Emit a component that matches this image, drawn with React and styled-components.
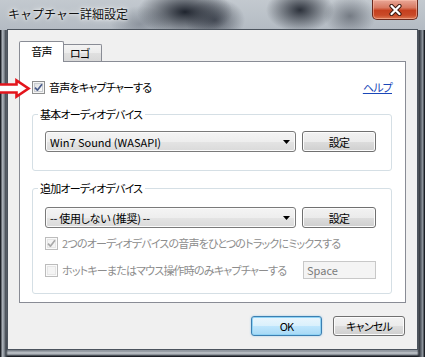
import React from "react";
import styled, { createGlobalStyle, css } from "styled-components";

const Global = createGlobalStyle`
  html, body { margin: 0; padding: 0; background: #fff; overflow: hidden; }
  body {
    font-family: "Noto Sans CJK JP", "Open Sans", sans-serif;
    font-size: 11px;
    color: #000;
  }
  * { box-sizing: border-box; }
`;

const jp = css`
  font-feature-settings: "palt";
  letter-spacing: -0.8px;
  white-space: nowrap;
`;

const Window = styled.div`
  width: 425px;
  height: 357px;
  display: flex;
  flex-direction: column;
  overflow: hidden;
  background:
    linear-gradient(90deg, #1f2329 0, #1f2329 1px, #b3b9c0 2px, #8b929a 4px, #3c424a 6px, rgba(0,0,0,0) 8px),
    linear-gradient(270deg, #1c2026 0, #1c2026 1px, #9aa1a9 2px, #5e656e 4px, #2e333a 6px, rgba(0,0,0,0) 8px),
    linear-gradient(0deg, #1a1e24 0, #1a1e24 1px, #7c838b 2px, #c4c9ce 4px, #8a9199 6px, rgba(0,0,0,0) 8px),
    radial-gradient(60px 40px at 20px 357px, #3a4049, rgba(0,0,0,0)),
    #a9b0b8;
`;

const TitleBar = styled.div`
  height: 30px;
  flex: none;
  display: flex;
  align-items: flex-start;
  justify-content: space-between;
  padding-left: 8px;
  background:
    radial-gradient(48px 24px at 185px 12px, rgba(22, 27, 37, 0.95), rgba(22, 27, 37, 0)),
    radial-gradient(30px 22px at 215px 20px, rgba(40, 46, 58, 0.7), rgba(40, 46, 58, 0)),
    radial-gradient(34px 22px at 300px 10px, rgba(28, 33, 43, 0.9), rgba(28, 33, 43, 0)),
    radial-gradient(26px 20px at 350px 16px, rgba(70, 76, 86, 0.6), rgba(70, 76, 86, 0)),
    radial-gradient(30px 18px at 140px 24px, rgba(90, 98, 110, 0.45), rgba(90, 98, 110, 0)),
    linear-gradient(180deg, #c3c9cf 0%, #b4bbc3 100%);
`;

const TitleText = styled.div`
  line-height: 28px;
  font-size: 12px;
  color: #111;
  white-space: nowrap;
  text-shadow: 0 0 6px rgba(255, 255, 255, 0.95), 0 0 3px rgba(255, 255, 255, 0.9);
`;

const CloseButton = styled.div`
  width: 46px;
  height: 20px;
  margin-right: 7px;
  border: 1px solid #6b2a1e;
  border-top: none;
  border-radius: 0 0 5px 5px;
  background: linear-gradient(180deg, #e9a797 0%, #d87a62 40%, #c5401f 55%, #c94a28 80%, #dc7a55 100%);
  box-shadow: inset 0 0 0 1px rgba(255, 200, 180, 0.5);
  display: flex;
  align-items: center;
  justify-content: center;
`;

const Frame = styled.div`
  flex: 1;
  min-height: 0;
  display: flex;
  padding: 0 8px 8px 8px;
`;

const Client = styled.div`
  flex: 1;
  min-width: 0;
  display: flex;
  flex-direction: column;
  background: #f0f0f0;
  padding: 11px 11px 0 11px;
  box-shadow: 0 0 0 1px #4c545e;
`;

const TabStrip = styled.div`
  display: flex;
  align-items: flex-end;
  height: 21px;
  margin-bottom: -1px;
  position: relative;
  z-index: 1;
`;

const Tab = styled.div`
  ${jp}
  display: flex;
  align-items: center;
  border: 1px solid #898c95;
  border-bottom: none;
  ${(p) =>
    p.$active
      ? `
    width: 45px;
    height: 21px;
    background: #fff;
    justify-content: center;
    padding-bottom: 2px;
    border-radius: 2px 2px 0 0;
  `
      : `
    width: 38px;
    height: 17px;
    margin-bottom: 1px;
    border-left: none;
    padding-left: 6px;
    background: linear-gradient(180deg, #f3f3f3 0%, #ececec 50%, #e0e0e0 51%, #d8d8d8 100%);
    border-radius: 0 2px 0 0;
  `}
`;

const Panel = styled.div`
  position: relative;
  height: 242px;
  min-width: 0;
  border: 1px solid #898c95;
  background: #fff;
  padding: 18px 13px 0 12px;
  display: flex;
  flex-direction: column;
`;

const Arrow = styled.svg`
  position: absolute;
  left: -20px;
  top: 16px;
`;

const Row = styled.div`
  display: flex;
  align-items: center;
  justify-content: space-between;
  height: ${(p) => p.$h || 14}px;
  margin-top: ${(p) => p.$mt || 0}px;
`;

const CheckLabel = styled.label`
  ${jp}
  display: flex;
  align-items: center;
  gap: 4px;
  color: ${(p) => (p.$disabled ? "#8d8d8d" : "#000")};
`;

const Box = styled.span`
  width: 13px;
  height: 13px;
  flex: none;
  display: flex;
  align-items: center;
  justify-content: center;
  border: 1px solid ${(p) => (p.$disabled ? "#bcbcbc" : "#8e8f8f")};
  background: ${(p) =>
    p.$disabled ? "#f4f4f4" : "linear-gradient(135deg, #d8dadc 0%, #f6f6f6 70%, #ffffff 100%)"};
  box-shadow: inset 0 0 0 1px ${(p) => (p.$disabled ? "#fafafa" : "#f4f4f4")},
    inset 0 0 0 2px ${(p) => (p.$disabled ? "#e6e6e6" : "#c9ccd0")};
`;

const HelpLink = styled.a`
  ${jp}
  color: #1a47b8;
  text-decoration: underline;
  cursor: pointer;
`;

const Group = styled.fieldset`
  margin: ${(p) => p.$mt}px 0 0 0;
  padding: 0;
  border: 1px solid #d5dfe5;
  border-radius: 3px;
  min-width: 0;
`;

const Legend = styled.legend`
  ${jp}
  margin-left: 5px;
  padding: 0 3px 0 2px;
  line-height: 14px;
`;

const GroupBody = styled.div`
  padding: ${(p) => p.$pt}px 15px ${(p) => p.$pb}px 12px;
  display: flex;
  flex-direction: column;
`;

const ComboRow = styled.div`
  display: flex;
  gap: 6px;
  height: 21px;
`;

const Combo = styled.div`
  flex: 1;
  min-width: 0;
  height: 21px;
  border: 1px solid #7a7a7a;
  border-radius: 3px;
  background: linear-gradient(180deg, #f4f4f4 0%, #eeeeee 50%, #e4e4e4 51%, #dadada 100%);
  box-shadow: inset 0 0 0 1px #fbfbfb;
  display: flex;
  align-items: center;
  justify-content: space-between;
  padding: 0 5px 0 4px;
  white-space: nowrap;
  font-feature-settings: "palt";
`;

const ComboText = styled.span`
  letter-spacing: ${(p) => p.$ls || 0}px;
`;

const Button = styled.div`
  ${jp}
  flex: none;
  width: ${(p) => p.$w}px;
  height: ${(p) => p.$h}px;
  display: flex;
  align-items: center;
  justify-content: center;
  border-radius: 3px;
  border: 1px solid ${(p) => (p.$default ? "#3c7fb1" : "#707070")};
  background: ${(p) =>
    p.$default
      ? "linear-gradient(180deg, #eaf6fd 0%, #d9f0fc 50%, #bee6fd 51%, #a7d9f5 100%)"
      : "linear-gradient(180deg, #f2f2f2 0%, #ebebeb 50%, #dddddd 51%, #cfcfcf 100%)"};
  box-shadow: inset 0 0 0 1px ${(p) => (p.$default ? "#8fd3f5" : "#fcfcfc")}
    ${(p) => (p.$default ? ", 0 0 2px rgba(60, 160, 230, 0.5)" : "")};
`;

const TextBox = styled.div`
  flex: none;
  width: 73px;
  height: 18px;
  border: 1px solid #c8c8c8;
  background: #f4f4f4;
  color: #7a7a7a;
  display: flex;
  align-items: center;
  padding-left: 3px;
`;

const Footer = styled.div`
  display: flex;
  justify-content: flex-end;
  gap: 11px;
  margin-top: 13px;
  padding-right: 1px;
`;

const Check = ({ checked, disabled }) => (
  <Box $disabled={disabled}>
    {checked && (
      <svg width="9" height="9" viewBox="0 0 9 9">
        <path
          d="M1 4.6 L3.4 7.2 L8 1.2"
          fill="none"
          stroke={disabled ? "#a8a8a8" : "#4a5d8c"}
          strokeWidth="1.7"
          strokeLinejoin="round"
        />
      </svg>
    )}
  </Box>
);

const DropArrow = () => (
  <svg width="7" height="4" viewBox="0 0 7 4">
    <path d="M0 0 H7 L3.5 4 Z" fill="#000" />
  </svg>
);

export default function App() {
  return (
    <>
      <Global />
      <Window>
        <TitleBar>
          <TitleText>キャプチャー詳細設定</TitleText>
          <CloseButton>
            <svg width="13" height="12" viewBox="0 0 13 12">
              <path d="M2.5 2 L10.5 10 M10.5 2 L2.5 10" stroke="#3b1910" strokeWidth="4.2" strokeLinecap="round" />
              <path d="M2.5 2 L10.5 10 M10.5 2 L2.5 10" stroke="#ffffff" strokeWidth="2.3" strokeLinecap="round" />
            </svg>
          </CloseButton>
        </TitleBar>
        <Frame>
          <Client>
            <TabStrip>
              <Tab $active>音声</Tab>
              <Tab>ロゴ</Tab>
            </TabStrip>
            <Panel>
              <Arrow width="31" height="21" viewBox="0 0 31 21">
                <path
                  d="M-2 6.5 H16.5 V2.5 L28.5 10.5 L16.5 18.5 V14.5 H-2 Z"
                  fill="#ffffff"
                  stroke="#e3141c"
                  strokeWidth="2.6"
                  strokeLinejoin="miter"
                />
              </Arrow>
              <Row>
                <CheckLabel>
                  <Check checked />
                  音声をキャプチャーする
                </CheckLabel>
                <HelpLink>ヘルプ</HelpLink>
              </Row>
              <Group $mt={13}>
                <Legend>基本オーディオデバイス</Legend>
                <GroupBody $pt={10} $pb={18}>
                  <ComboRow>
                    <Combo>
                      <ComboText>Win7 Sound (WASAPI)</ComboText>
                      <DropArrow />
                    </Combo>
                    <Button $w={74} $h={21}>設定</Button>
                  </ComboRow>
                </GroupBody>
              </Group>
              <Group $mt={10}>
                <Legend>追加オーディオデバイス</Legend>
                <GroupBody $pt={12} $pb={14}>
                  <ComboRow>
                    <Combo>
                      <ComboText $ls={-0.3}>-- 使用しない (推奨) --</ComboText>
                      <DropArrow />
                    </Combo>
                    <Button $w={74} $h={21}>設定</Button>
                  </ComboRow>
                  <Row $mt={8}>
                    <CheckLabel $disabled>
                      <Check checked disabled />
                      2つのオーディオデバイスの音声をひとつのトラックにミックスする
                    </CheckLabel>
                  </Row>
                  <Row $mt={11} $h={18}>
                    <CheckLabel $disabled>
                      <Check disabled />
                      ホットキーまたはマウス操作時のみキャプチャーする
                    </CheckLabel>
                    <TextBox>Space</TextBox>
                  </Row>
                </GroupBody>
              </Group>
            </Panel>
            <Footer>
              <Button $default $w={71} $h={20}>OK</Button>
              <Button $w={72} $h={20}>キャンセル</Button>
            </Footer>
          </Client>
        </Frame>
      </Window>
    </>
  );
}
